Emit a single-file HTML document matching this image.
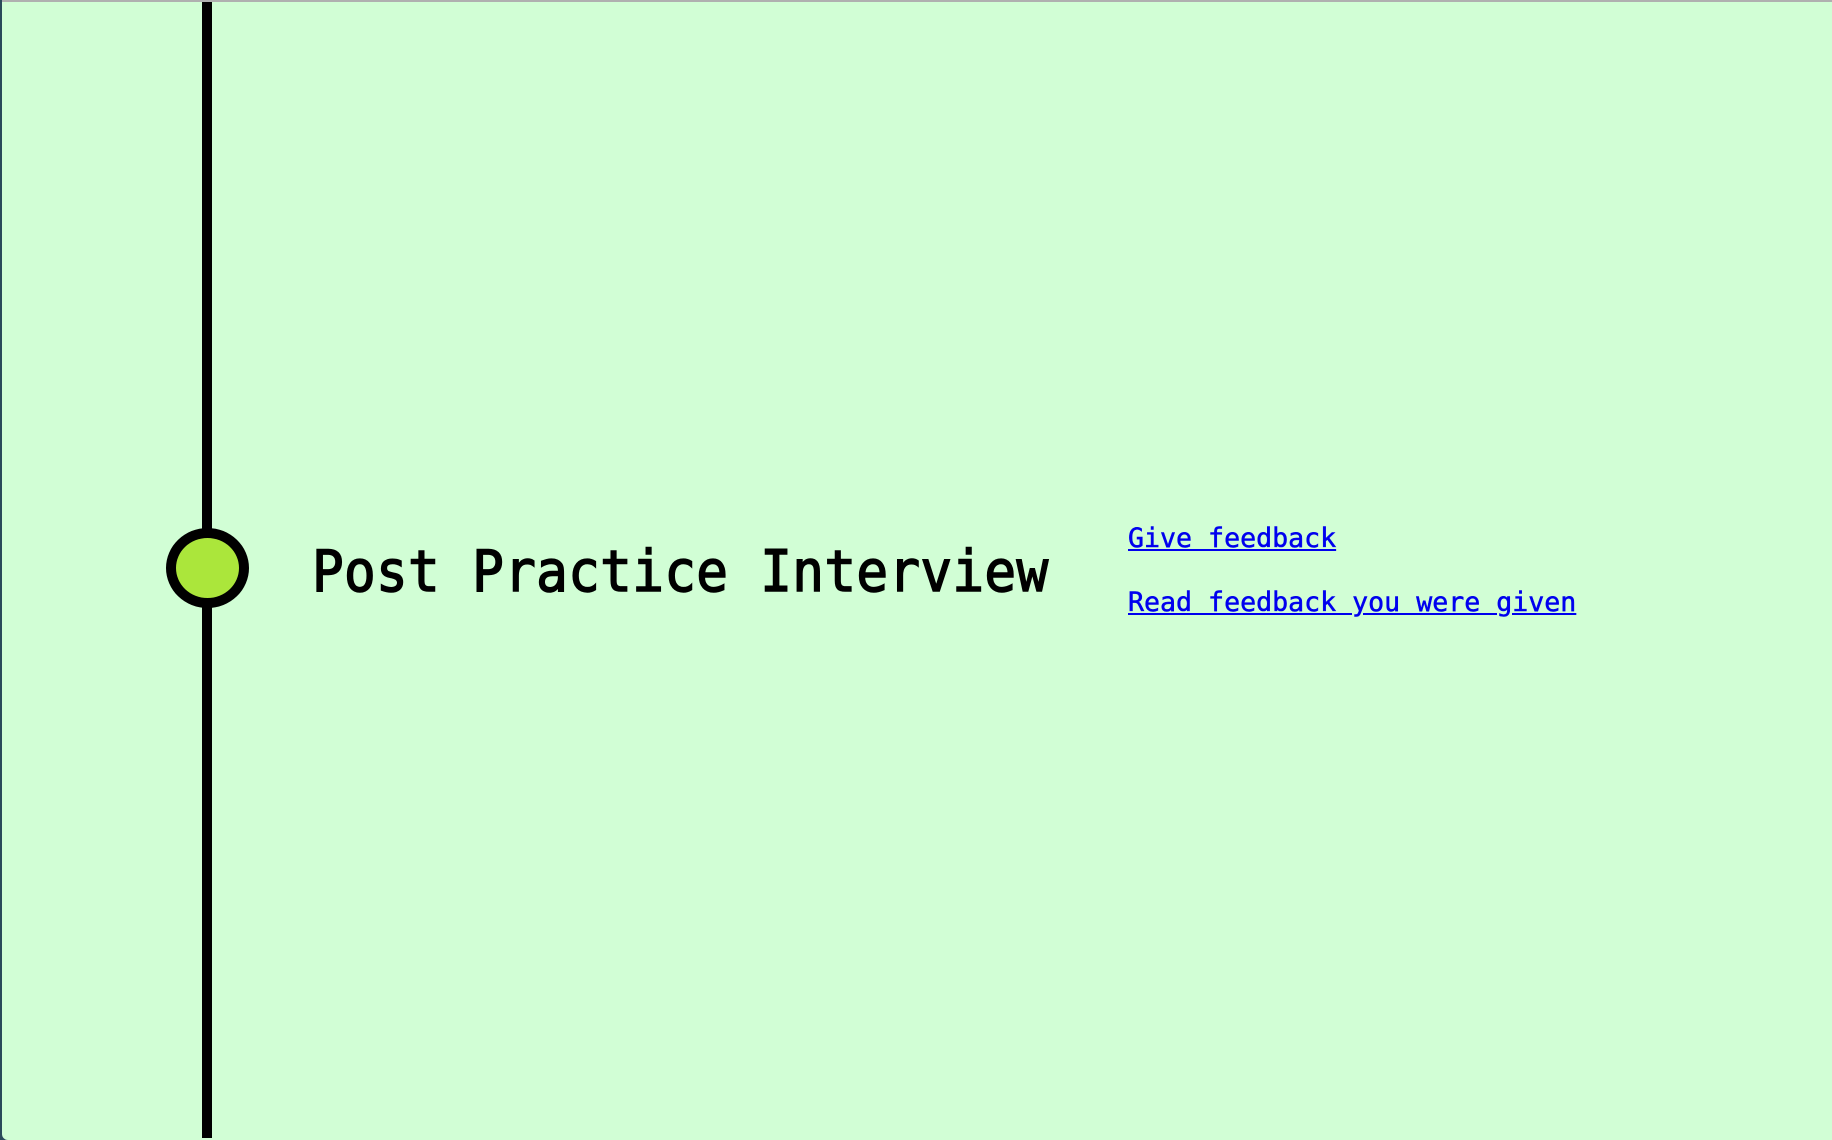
<!DOCTYPE html>
<html><head><meta charset="utf-8"><style>
html,body{margin:0;padding:0;width:1832px;height:1136px;overflow:hidden;background:#2a4a5a;}
#p{position:absolute;left:2px;top:0;width:1830px;height:1140px;background:#d1fed5;border-top:2px solid #b0b0b0;box-sizing:border-box;border-bottom-left-radius:6px;}
.line{position:absolute;left:202px;top:2px;width:10px;height:1136px;background:#000;}
.dot{position:absolute;left:166px;top:528px;width:83px;height:80px;box-sizing:border-box;border:10px solid #000;border-radius:50%;background:#abe63b;}
.t{position:absolute;left:312px;top:548px;font-family:"DejaVu Sans Mono","Liberation Mono",monospace;font-size:52.7px;line-height:52.7px;color:#000;white-space:nowrap;transform:scaleY(1.09);transform-origin:0 84.6%;letter-spacing:0.3px;-webkit-text-stroke:1.4px #000;}
a{position:absolute;left:1128px;font-family:"DejaVu Sans Mono","Liberation Mono",monospace;font-size:26.6px;line-height:26.6px;color:#0000ee;white-space:nowrap;-webkit-text-stroke:0.5px #0000ee;}
</style></head><body>
<div id="p"></div>
<div class="line"></div>
<div class="dot"></div>
<div class="t">Post Practice Interview</div>
<a href="#" style="top:526px">Give feedback</a>
<a href="#" style="top:590px">Read feedback you were given</a>
</body></html>
